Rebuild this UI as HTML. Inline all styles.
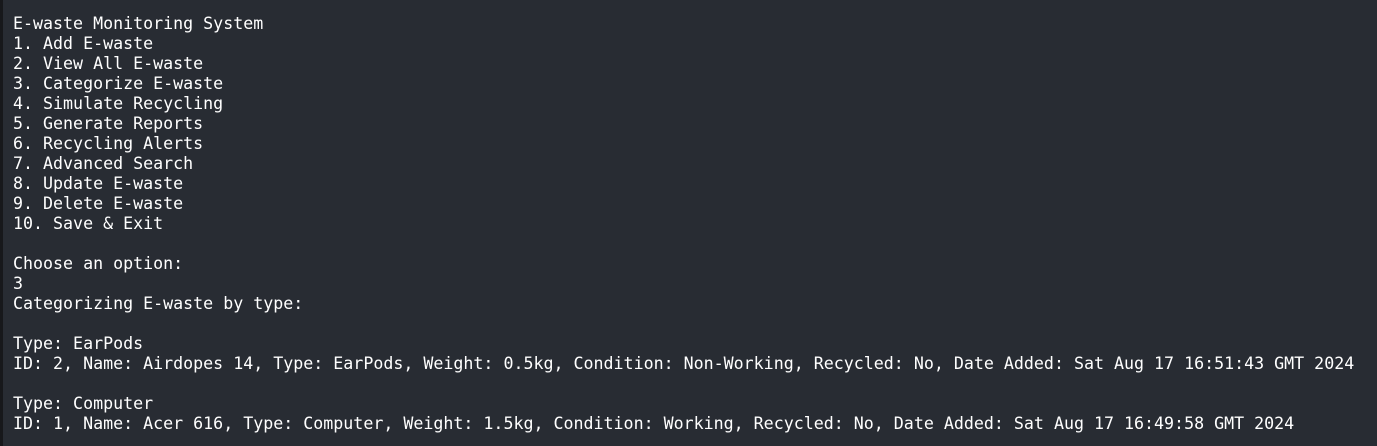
<!DOCTYPE html>
<html><head><style>
html,body{margin:0;padding:0}
body{width:1377px;height:446px;background:#282c33;overflow:hidden;position:relative}
.s{position:absolute;left:0;top:0;width:3px;height:446px;background:#17181b}
pre{margin:0;position:absolute;left:13px;top:14px;font-family:"DejaVu Sans Mono","Liberation Mono",monospace;font-size:16.64px;line-height:20px;color:#ffffff}
</style></head><body><div class="s"></div><pre>E-waste Monitoring System
1. Add E-waste
2. View All E-waste
3. Categorize E-waste
4. Simulate Recycling
5. Generate Reports
6. Recycling Alerts
7. Advanced Search
8. Update E-waste
9. Delete E-waste
10. Save &amp; Exit

Choose an option:
3
Categorizing E-waste by type:

Type: EarPods
ID: 2, Name: Airdopes 14, Type: EarPods, Weight: 0.5kg, Condition: Non-Working, Recycled: No, Date Added: Sat Aug 17 16:51:43 GMT 2024

Type: Computer
ID: 1, Name: Acer 616, Type: Computer, Weight: 1.5kg, Condition: Working, Recycled: No, Date Added: Sat Aug 17 16:49:58 GMT 2024</pre></body></html>
